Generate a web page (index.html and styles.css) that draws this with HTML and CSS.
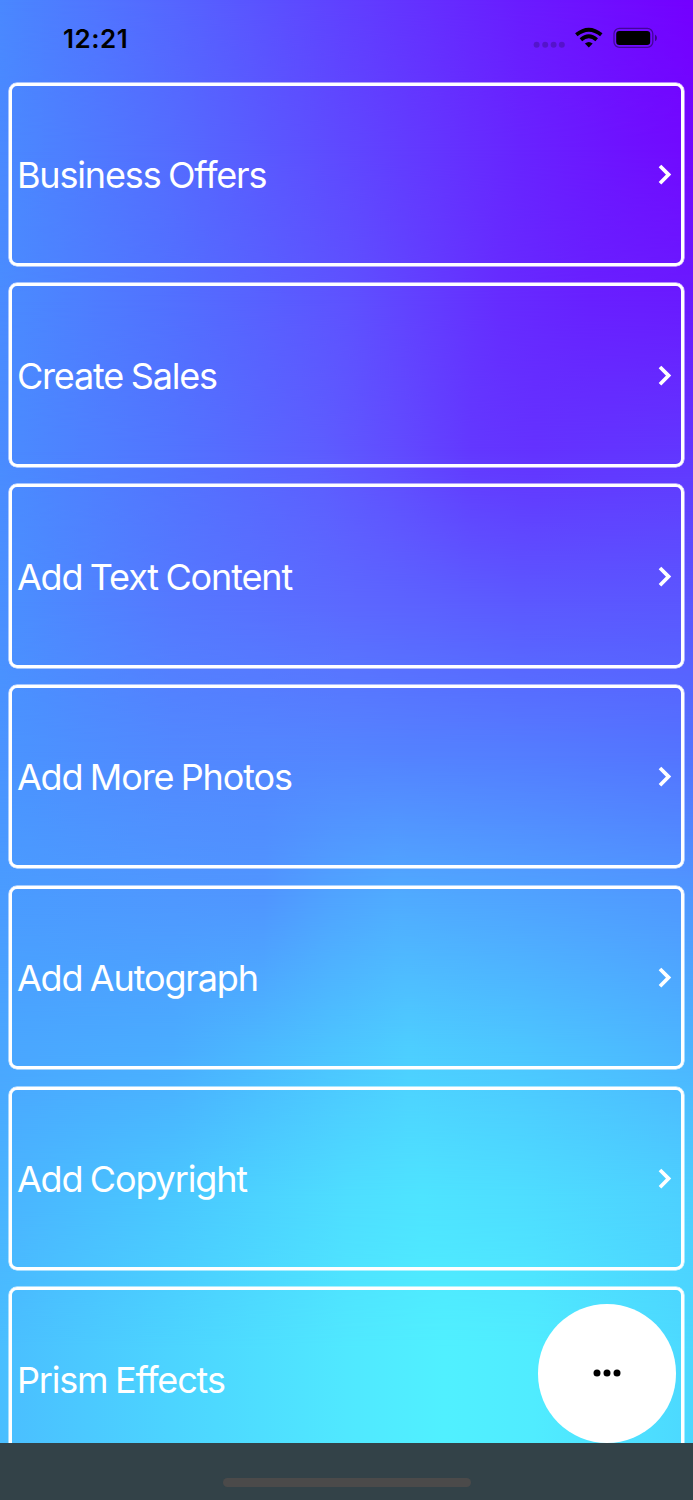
FILE: index.html
```html
<!DOCTYPE html>
<html lang="en">
<head>
    <meta charset="UTF-8">
    <meta name="viewport" content="width=device-width, initial-scale=1.0">
    <title>Menu</title>
    <link rel="stylesheet" href="styles.css">
</head>
<body>
    <div class="screen">
        <div class="backdrop">
            <div class="wash wash-0"></div>
            <div class="wash wash-1"></div>
            <div class="wash wash-2"></div>
            <div class="wash wash-3"></div>
            <div class="wash wash-4"></div>
            <div class="wash wash-5"></div>
            <div class="wash wash-6"></div>
            <div class="wash wash-7"></div>
            <div class="wash wash-8"></div>
            <div class="wash wash-9"></div>
        </div>

        <header class="status-bar">
            <span class="time">12:21</span>
            <svg class="status-icons" width="126" height="24" viewBox="0 0 126 24">
                <!-- no signal -->
                <g opacity="0.2">
                    <circle cx="3.6" cy="18.7" r="3"/>
                    <circle cx="12.2" cy="18.7" r="3"/>
                    <circle cx="20.6" cy="18.7" r="3"/>
                    <circle cx="28.8" cy="18.7" r="3"/>
                </g>
                <!-- wifi -->
                <g fill="none" stroke="#000" stroke-width="3.8">
                    <path d="M43.3 8.8 Q55.8 -1.4 68.3 8.8"/>
                    <path d="M47.9 13.7 Q55.8 6.8 63.7 13.7"/>
                </g>
                <path d="M51.9 17.6 Q55.8 14.2 59.7 17.6 L55.8 21.6 Z"/>
                <!-- battery -->
                <rect x="81" y="2.4" width="38.8" height="19" rx="5.4" fill="none" stroke="#000" stroke-opacity="0.4" stroke-width="1.3"/>
                <rect x="83.2" y="4.9" width="34" height="14" rx="3.2"/>
                <path d="M122 8.6 Q124 9.8 124 11.9 Q124 14 122 15.2 Z" opacity="0.45"/>
            </svg>
        </header>

        <main class="menu">
            <a class="card">Business Offers
                <svg class="chevron" width="14" height="22" viewBox="0 0 14 22"><path d="M2 2 L10.6 10.6 L2 19.2"/></svg>
            </a>
            <a class="card">Create Sales
                <svg class="chevron" width="14" height="22" viewBox="0 0 14 22"><path d="M2 2 L10.6 10.6 L2 19.2"/></svg>
            </a>
            <a class="card">Add Text Content
                <svg class="chevron" width="14" height="22" viewBox="0 0 14 22"><path d="M2 2 L10.6 10.6 L2 19.2"/></svg>
            </a>
            <a class="card">Add More Photos
                <svg class="chevron" width="14" height="22" viewBox="0 0 14 22"><path d="M2 2 L10.6 10.6 L2 19.2"/></svg>
            </a>
            <a class="card">Add Autograph
                <svg class="chevron" width="14" height="22" viewBox="0 0 14 22"><path d="M2 2 L10.6 10.6 L2 19.2"/></svg>
            </a>
            <a class="card">Add Copyright
                <svg class="chevron" width="14" height="22" viewBox="0 0 14 22"><path d="M2 2 L10.6 10.6 L2 19.2"/></svg>
            </a>
            <a class="card">Prism Effects</a>
        </main>

        <button class="more" aria-label="More">
            <svg width="28" height="8" viewBox="0 0 28 8">
                <circle cx="4" cy="4" r="3.5"/>
                <circle cx="14" cy="4" r="3.5"/>
                <circle cx="24" cy="4" r="3.5"/>
            </svg>
        </button>

        <footer class="bottom-bar">
            <div class="home-indicator"></div>
        </footer>
    </div>
</body>
</html>
```
FILE: styles.css
```css
body {
    margin: 0;
    font-family: Inter, "Liberation Sans", sans-serif;
}

.screen {
    position: relative;
    display: flex;
    flex-direction: column;
    height: 1500px;
    overflow: hidden;
}

/* Each wash starts one row lower and fades in over the one above it */
.backdrop {
    position: absolute;
    inset: 0;
    display: grid;
    grid-template-rows: repeat(10, 150px);
    grid-template-columns: 100%;
}

.wash {
    grid-column: 1;
    -webkit-mask-image: linear-gradient(transparent, #000 150px);
    mask-image: linear-gradient(transparent, #000 150px);
}

.wash-0 {
    grid-row: 1 / -1;
    background: linear-gradient(90deg, #4a88ff, #5566ff 25%, #6040ff 50%, #6a1cff 75%, #7400ff);
    -webkit-mask-image: none;
    mask-image: none;
}

.wash-1 {
    grid-row: 1 / -1;
    background: linear-gradient(90deg, #4a8aff, #546cff 25%, #5f48ff 50%, #6824ff 75%, #6e12ff 90%, #7208ff);
}

.wash-2 {
    grid-row: 2 / -1;
    background: linear-gradient(90deg, #4a8cff, #5270ff 25%, #5e52ff 50%, #662cff 72%, #6820ff 85%, #6a1aff);
}

.wash-3 {
    grid-row: 3 / -1;
    background: linear-gradient(90deg, #4a8cff, #5274ff 25%, #5d5cff 47%, #614cff 57%, #6338ff 68%, #6432ff 77%, #6236ff);
}

.wash-4 {
    grid-row: 4 / -1;
    background: linear-gradient(90deg, #4a90ff, #5578ff 25%, #5c68ff 50%, #5c58ff 75%, #5b56ff);
}

.wash-5 {
    grid-row: 5 / -1;
    background: linear-gradient(90deg, #4a94ff, #5288ff 25%, #5484ff 50%, #547cff 75%, #5472ff);
}

.wash-6 {
    grid-row: 6 / -1;
    background: linear-gradient(90deg, #4a9cff, #4f98ff 25%, #5096ff 38%, #50a4ff 48%, #50acff 57%, #50a4ff 75%, #5098ff);
}

.wash-7 {
    grid-row: 7 / -1;
    background: linear-gradient(90deg, #4aa6ff, #4aacff 25%, #4cc4ff 48%, #4dceff 59%, #4cc6ff 75%, #4cb4ff);
}

.wash-8 {
    grid-row: 8 / -1;
    background: linear-gradient(90deg, #4ab4ff, #4ac8ff 25%, #4edeff 50%, #4ee4ff 61%, #4edeff 75%, #4dd0ff);
}

.wash-9 {
    grid-row: 9 / -1;
    background: linear-gradient(90deg, #4abeff, #4cd4ff 25%, #50e8ff 50%, #50f0ff 64%, #50ecff 77%, #4cd8ff);
}

.status-bar {
    position: relative;
    display: flex;
    justify-content: space-between;
    flex: none;
    height: 55px;
    padding: 26px 34px 0 63px;
}

.time {
    font-size: 26px;
    line-height: 25px;
    font-weight: 600;
    letter-spacing: 0.5px;
    color: #000;
}

.menu {
    position: relative;
    display: flex;
    flex-direction: column;
    gap: 17.3px;
    flex: 1;
    min-height: 0;
    padding: 1.6px 9px 0;
    overflow: hidden;
}

.card {
    display: flex;
    align-items: center;
    justify-content: space-between;
    flex: none;
    height: 183.5px;
    padding: 1.2px 9px 0 4.9px;
    box-sizing: border-box;
    border: 3px solid #fff;
    border-radius: 8px;
    box-shadow: 0 0 0 0.5px #fff;
    color: #fff;
    font-size: 36px;
    font-variant-ligatures: none;
    letter-spacing: -1.15px;
    word-spacing: -1.5px;
}

.chevron {
    fill: none;
    stroke: #fff;
    stroke-width: 3.7;
}

.more {
    position: absolute;
    right: 17px;
    bottom: 57.5px;
    display: flex;
    align-items: center;
    justify-content: center;
    width: 138.5px;
    height: 138.5px;
    padding: 0;
    border: none;
    border-radius: 50%;
    background-color: #fff;
}

.bottom-bar {
    position: relative;
    display: flex;
    justify-content: center;
    align-items: flex-end;
    flex: none;
    height: 57px;
    padding-bottom: 13.5px;
    box-sizing: border-box;
    background-color: #334248;
}

.home-indicator {
    width: 248px;
    height: 8.5px;
    border-radius: 5px;
    background-color: #4b4a4a;
}
```
